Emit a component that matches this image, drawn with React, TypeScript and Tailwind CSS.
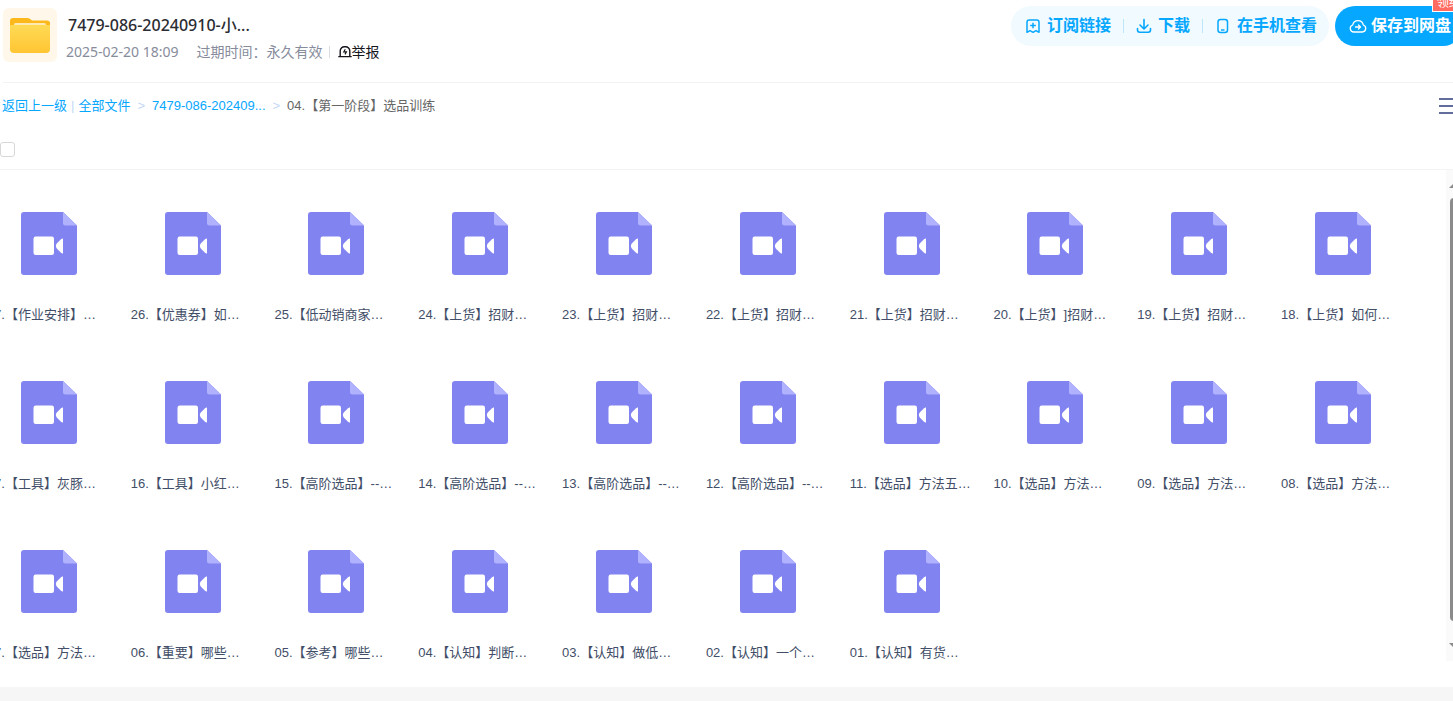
import type { ReactNode } from 'react';

const files = [
  '27.【作业安排】…', '26.【优惠券】如…', '25.【低动销商家…', '24.【上货】招财…', '23.【上货】招财…',
  '22.【上货】招财…', '21.【上货】招财…', '20.【上货】]招财…', '19.【上货】招财…', '18.【上货】如何…',
  '17.【工具】灰豚…', '16.【工具】小红…', '15.【高阶选品】--…', '14.【高阶选品】--…', '13.【高阶选品】--…',
  '12.【高阶选品】--…', '11.【选品】方法五…', '10.【选品】方法…', '09.【选品】方法…', '08.【选品】方法…',
  '07.【选品】方法…', '06.【重要】哪些…', '05.【参考】哪些…', '04.【认知】判断…', '03.【认知】做低…',
  '02.【认知】一个…', '01.【认知】有货…',
];

function FolderIcon() {
  return (
    <svg viewBox="0 0 54 54" className="size-[54px] shrink-0" aria-hidden="true">
      <defs>
        <linearGradient id="folder" x1="0" y1="0" x2="0" y2="1">
          <stop offset="0" stopColor="#ffda55" />
          <stop offset="1" stopColor="#ffc533" />
        </linearGradient>
      </defs>
      <rect width="54" height="54" rx="6" fill="#fff8ea" />
      <path d="M7 23V13q0-3 3-3h14q2 0 3.500 1.300l1.500 1.200h15q3 0 3 3V24z" fill="#fdb81c" />
      <rect x="11" y="15" width="32" height="8" rx="1.500" fill="#ffe9b3" />
      <path d="M7 18q0-1 1-1h38q1 0 1 1v23q0 4-4 4H11q-4 0-4-4z" fill="url(#folder)" />
    </svg>
  );
}

function ReportIcon() {
  return (
    <svg viewBox="0 0 14 14" className="size-[14px]" fill="none" stroke="#15161c" strokeWidth="1.400" aria-hidden="true">
      <path d="M2.200 11.200V6a4.200 4.200 0 0 1 4.200-4.200h1.200A4.200 4.200 0 0 1 11.800 6v5.200M.3 11.600h13.400" />
      <path d="M7.300 4.200L5.800 6.800h2.600L7 9.400" strokeWidth="1.200" />
    </svg>
  );
}

function SubscribeIcon() {
  return (
    <svg viewBox="0 0 16 16" className="size-4" fill="none" stroke="currentColor" strokeWidth="1.500" strokeLinejoin="round" aria-hidden="true">
      <path d="M2 14.300V4.200Q2 2 4.200 2h7.600Q14 2 14 4.200v10.100l-3-1.600-3 1.600-3-1.600z" />
      <path d="M8 4.700v5.600M5.200 7.500h5.600" />
    </svg>
  );
}

function DownloadIcon() {
  return (
    <svg viewBox="0 0 16 16" className="size-4" fill="none" stroke="currentColor" strokeWidth="1.600" strokeLinecap="round" strokeLinejoin="round" aria-hidden="true">
      <path d="M8 1.500v9M4 7l4 4 4-4M1.500 10.500V12q0 2.200 2.200 2.200h8.600q2.200 0 2.200-2.200v-1.500" />
    </svg>
  );
}

function PhoneIcon() {
  return (
    <svg viewBox="0 0 16 16" className="size-4" fill="none" stroke="currentColor" strokeWidth="1.500" aria-hidden="true">
      <rect x="3" y="1.500" width="9.500" height="13" rx="2.500" />
      <path d="M6 12h3.500" />
    </svg>
  );
}

function CloudIcon() {
  return (
    <svg viewBox="0 0 18 16" className="h-4 w-[18px]" fill="none" stroke="currentColor" strokeWidth="1.300" strokeLinecap="round" strokeLinejoin="round" aria-hidden="true">
      <path d="M5 14h8.300a3.600 3.600 0 0 0 1-7A5.400 5.400 0 0 0 3.700 7 3.600 3.600 0 0 0 5 14z" />
      <path d="M6.500 9h5M9.500 7l2 2-2 2" />
    </svg>
  );
}

function VideoFileIcon() {
  return (
    <svg viewBox="0 0 56 64" className="h-16 w-14" aria-hidden="true">
      <path d="M3 1h39l14 13.500V61q0 3-3 3H3q-3 0-3-3V4q0-3 3-3z" fill="#8183f1" />
      <path d="M42 1l14 13.500H44.500Q42 14.500 42 12z" fill="#b1b2ff" />
      <rect x="12.500" y="25.500" width="20.500" height="18.500" rx="2.200" fill="#fff" />
      <path d="M42 27v15.500q-1 .2-2-.8l-4-4q-2.300-2.700 0-5.400l4-4q1-1 2-.8z" fill="#fff" />
    </svg>
  );
}

function Action({ icon, children }: { icon: ReactNode; children: ReactNode }) {
  return (
    <button type="button" className="flex items-center gap-[6px] text-base font-bold text-[#06a7ff]">
      {icon}
      {children}
    </button>
  );
}

function Divider() {
  return <span className="h-[14px] w-px bg-[#bfe5fb]" />;
}

export default function App() {
  return (
    <div className="overflow-hidden whitespace-nowrap bg-white font-['Liberation_Sans','Noto_Sans_CJK_SC',sans-serif] text-sm [text-spacing-trim:space-all]">
      <header className="ml-[3px] flex h-[83px] items-start justify-between border-b border-[#f2f3f5]">
        <div className="flex gap-[9px] pt-2">
          <FolderIcon />
          <div className="font-['Noto_Sans','Noto_Sans_CJK_SC',sans-serif]">
            <h1 className="pt-[5px] pl-[2px] text-base leading-6 font-medium text-[#2b2c33]">7479-086-20240910-小...</h1>
            <div className="flex items-center pt-[3px] text-sm leading-6 text-[#878c9c]">
              <time>2025-02-20 18:09</time>
              <span className="ml-[18px]">过期时间：永久有效</span>
              <span className="ml-[6px] h-3 w-px bg-[#d8dbe3]" />
              <a href="#report" className="ml-2 flex items-center text-[#15161c]">
                <ReportIcon />
                举报
              </a>
            </div>
          </div>
        </div>
        <div className="-mr-[10px] flex gap-[6px] pt-[6px]">
          <div className="flex h-10 items-center gap-3 rounded-full bg-[#f0faff] pr-3 pl-[14px]">
            <Action icon={<SubscribeIcon />}>订阅链接</Action>
            <Divider />
            <Action icon={<DownloadIcon />}>下载</Action>
            <Divider />
            <Action icon={<PhoneIcon />}>在手机查看</Action>
          </div>
          <div className="relative">
            <button type="button" className="flex h-10 items-center gap-1 rounded-full bg-[#06a7ff] pr-3 pl-[14px] text-base font-bold text-white">
              <CloudIcon />
              保存到网盘
            </button>
            <span className="absolute -top-3 left-[97px] border border-white bg-[#ff6b60] px-1 text-xs leading-4 text-white">领红包</span>
          </div>
        </div>
      </header>

      <div className="flex h-[46px] items-center justify-between">
        <nav className="flex items-center pl-[2px] text-[13px] leading-5 text-[#06a7ff]" aria-label="路径">
          <a href="#back">返回上一级</a>
          <span className="px-1 text-[#c4d8f5]">|</span>
          <a href="#all">全部文件</a>
          <span className="px-[7px] text-[#c4d8f5]">&gt;</span>
          <a href="#parent">7479-086-202409...</a>
          <span className="px-[7px] text-[#c4d8f5]">&gt;</span>
          <span className="text-[#666]">04.【第一阶段】选品训练</span>
        </nav>
        <button type="button" aria-label="列表模式" className="-mr-1 flex w-[18px] flex-col gap-[5px]">
          <span className="h-[2px] bg-[#636d9b]" />
          <span className="h-[2px] bg-[#636d9b]" />
          <span className="h-[2px] bg-[#636d9b]" />
        </button>
      </div>

      <div className="flex h-[41px] items-center border-b border-[#f2f3f5]">
        <input type="checkbox" aria-label="全选" className="size-[15px] appearance-none rounded-[3px] border border-[#d8d8d8] bg-white" />
      </div>

      <main className="flex pb-[10px]">
        <ul className="-ml-[23px] grid flex-1 grid-cols-10 pr-[31px]">
          {files.map((name) => (
            <li key={name} className="pt-[41px] pb-[14px]">
              <a href="#file" className="flex flex-col items-center gap-[30px] text-[13px] text-[#424e67]">
                <VideoFileIcon />
                <span className="w-[124px] leading-5">{name}</span>
              </a>
            </li>
          ))}
        </ul>
        <div className="mb-4 flex w-[7px] flex-col overflow-hidden bg-[#fafafa] pt-[14px] pb-[14px] pl-[3px]" aria-hidden="true">
          <svg viewBox="0 0 8 4" className="h-1 w-2 shrink-0" fill="#8b8b8b"><path d="M0 4l4-4 4 4z" /></svg>
          <span className="mt-[10px] mb-[22px] ml-px w-2 grow rounded-full bg-[#8b8b8b]" />
          <svg viewBox="0 0 8 4" className="h-1 w-2 shrink-0" fill="#8b8b8b"><path d="M0 0l4 4 4-4z" /></svg>
        </div>
      </main>
      <footer className="h-[14px] bg-[#f6f6f6]" />
    </div>
  );
}
